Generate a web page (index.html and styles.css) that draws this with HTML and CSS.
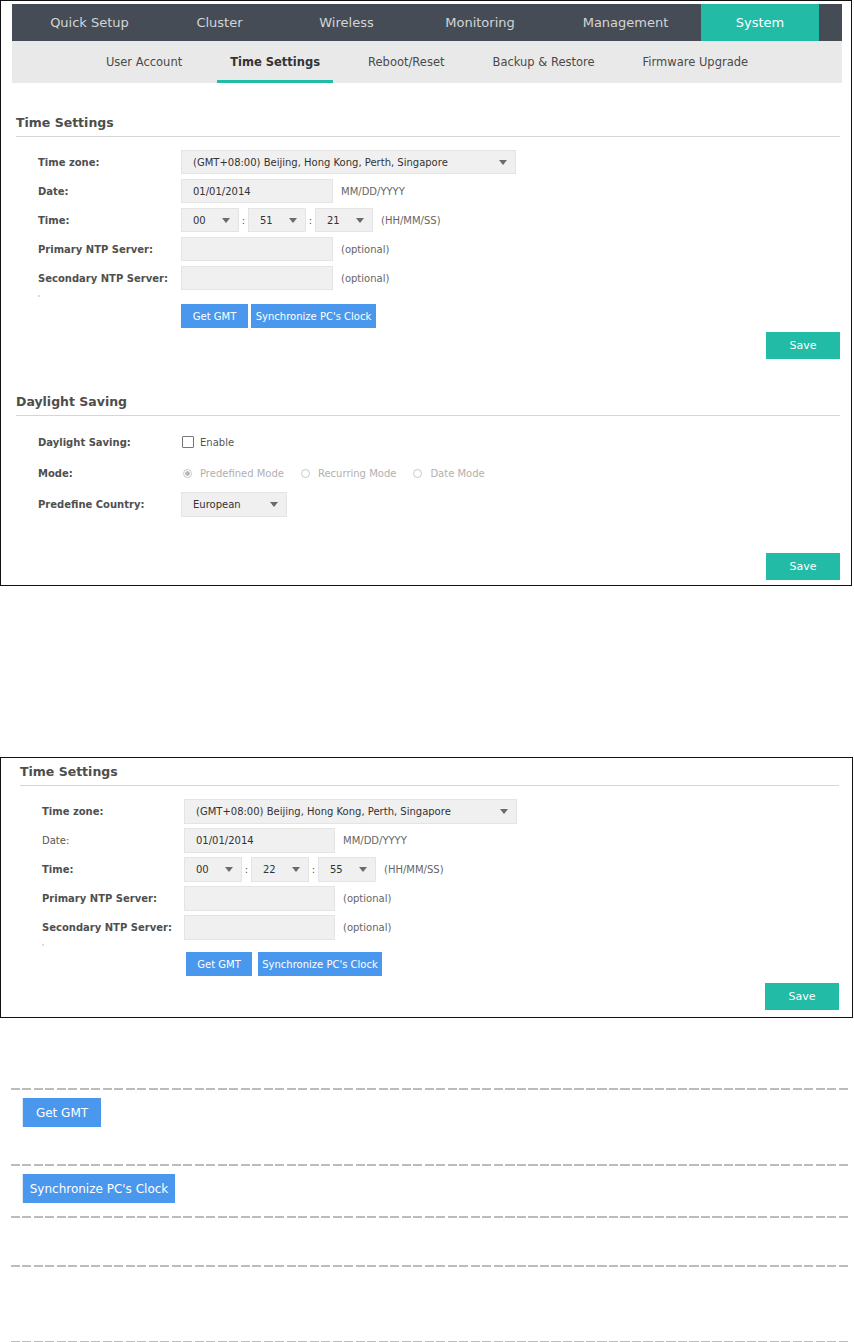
FILE: index.html
```html
<!DOCTYPE html>
<html lang="en">
  <head>
    <meta charset="UTF-8" />
    <title>Time Settings</title>
    <link rel="stylesheet" href="styles.css">
  </head>
  <body>
    <div class="panel panel-main">
      <div class="topnav">
        <a class="tab tab-setup">Quick Setup</a>
        <a class="tab tab-cluster">Cluster</a>
        <a class="tab tab-wireless">Wireless</a>
        <a class="tab tab-monitor">Monitoring</a>
        <a class="tab tab-manage">Management</a>
        <a class="tab tab-system active">System</a>
      </div>
      <div class="subnav">
        <a>User Account</a>
        <a class="active">Time Settings</a>
        <a>Reboot/Reset</a>
        <a>Backup &amp; Restore</a>
        <a>Firmware Upgrade</a>
      </div>

      <div class="section">
        <h3 class="sec-title">Time Settings</h3>
        <div class="form">
          <div class="row">
            <label>Time zone:</label>
            <div class="field select w-zone">(GMT+08:00) Beijing, Hong Kong, Perth, Singapore<span class="caret"></span></div>
          </div>
          <div class="row">
            <label>Date:</label>
            <div class="field w-text">01/01/2014</div>
            <span class="hint">MM/DD/YYYY</span>
          </div>
          <div class="row">
            <label>Time:</label>
            <div class="field select w-time">00<span class="caret"></span></div>
            <span class="colon">:</span>
            <div class="field select w-time">51<span class="caret"></span></div>
            <span class="colon">:</span>
            <div class="field select w-time">21<span class="caret"></span></div>
            <span class="hint">(HH/MM/SS)</span>
          </div>
          <div class="row">
            <label>Primary NTP Server:</label>
            <div class="field w-text"></div>
            <span class="hint">(optional)</span>
          </div>
          <div class="row">
            <label>Secondary NTP Server:</label>
            <div class="field w-text"></div>
            <span class="hint">(optional)</span>
          </div>
          <div class="dot"></div>
          <div class="btns">
            <button class="btn-blue btn-gmt">Get GMT</button>
            <button class="btn-blue btn-sync">Synchronize PC's Clock</button>
          </div>
        </div>
        <div class="save-row">
          <button class="btn-save">Save</button>
        </div>

        <h3 class="sec-title sec-second">Daylight Saving</h3>
        <div class="form">
          <div class="row tall">
            <label>Daylight Saving:</label>
            <span class="checkbox"></span>
            <span class="check-text">Enable</span>
          </div>
          <div class="row tall">
            <label>Mode:</label>
            <span class="option first"><span class="radio checked"></span>Predefined Mode</span>
            <span class="option"><span class="radio"></span>Recurring Mode</span>
            <span class="option"><span class="radio"></span>Date Mode</span>
          </div>
          <div class="row tall">
            <label>Predefine Country:</label>
            <div class="field select w-country">European<span class="caret"></span></div>
          </div>
        </div>
        <div class="save-row save-last">
          <button class="btn-save">Save</button>
        </div>
      </div>
    </div>

    <div class="panel panel-crop">
      <div class="section">
        <h3 class="sec-title">Time Settings</h3>
        <div class="form">
          <div class="row">
            <label>Time zone:</label>
            <div class="field select w-zone">(GMT+08:00) Beijing, Hong Kong, Perth, Singapore<span class="caret"></span></div>
          </div>
          <div class="row">
            <label class="plain">Date:</label>
            <div class="field w-text">01/01/2014</div>
            <span class="hint">MM/DD/YYYY</span>
          </div>
          <div class="row">
            <label>Time:</label>
            <div class="field select w-time">00<span class="caret"></span></div>
            <span class="colon">:</span>
            <div class="field select w-time">22<span class="caret"></span></div>
            <span class="colon">:</span>
            <div class="field select w-time">55<span class="caret"></span></div>
            <span class="hint">(HH/MM/SS)</span>
          </div>
          <div class="row">
            <label>Primary NTP Server:</label>
            <div class="field w-text"></div>
            <span class="hint">(optional)</span>
          </div>
          <div class="row">
            <label>Secondary NTP Server:</label>
            <div class="field w-text"></div>
            <span class="hint">(optional)</span>
          </div>
          <div class="dot"></div>
          <div class="btns">
            <button class="btn-blue btn-gmt">Get GMT</button>
            <button class="btn-blue btn-sync">Synchronize PC's Clock</button>
          </div>
        </div>
        <div class="save-row">
          <button class="btn-save">Save</button>
        </div>
      </div>
    </div>

    <div class="button-list">
      <div class="dash"></div>
      <div class="cell cell-a"><button class="btn-big btn-big-gmt">Get GMT</button></div>
      <div class="dash"></div>
      <div class="cell cell-b"><button class="btn-big btn-big-sync">Synchronize PC's Clock</button></div>
      <div class="dash"></div>
      <div class="cell cell-c"></div>
      <div class="dash"></div>
      <div class="cell cell-a"></div>
      <div class="dash"></div>
    </div>
  </body>
</html>
```

FILE: styles.css
```css
body {
  margin: 0;
  font-family: "DejaVu Sans", "Liberation Sans", sans-serif;
  background-color: #fff;
  color: #555;
}

button {
  font-family: inherit;
  border: none;
  padding: 0;
  cursor: pointer;
}

.panel {
  border: 1px solid #111;
  box-sizing: border-box;
}

.panel-main {
  width: 852px;
  padding-bottom: 5px;
}

/* top navigation */
.topnav {
  display: flex;
  height: 37px;
  margin: 3px 9px 0 11px;
  padding-left: 11px;
  background-color: #464c55;
}

.tab {
  display: block;
  text-align: center;
  font-size: 13px;
  line-height: 36px;
  padding-top: 1px;
  color: #d3d5d8;
}

.tab-setup { width: 133px; }
.tab-cluster { width: 127px; }
.tab-wireless { width: 127px; }
.tab-monitor { width: 140px; }
.tab-manage { width: 151px; }
.tab-system { width: 118px; }

.tab.active {
  background-color: #21bba6;
  color: #fff;
}

.subnav {
  display: flex;
  justify-content: center;
  gap: 22px;
  height: 42px;
  margin: 0 9px 0 11px;
  background-color: #e9e9e9;
}

.subnav a {
  padding: 0 13px;
  font-size: 11.5px;
  line-height: 43px;
  color: #4a4a4a;
}

.subnav a.active {
  font-weight: bold;
  color: #333;
  box-shadow: inset 0 -3px 0 #21bba6;
}

/* sections */
.section {
  padding: 0 11px 0 15px;
}

.sec-title {
  margin: 30px 0 0;
  padding-bottom: 3px;
  font-size: 12.5px;
  line-height: 20px;
  font-weight: bold;
  color: #4d4d4d;
  border-bottom: 1px solid #d6d6d6;
}

.sec-second {
  margin-top: 33px;
}

.form {
  margin-top: 13px;
  padding-left: 22px;
}

.row {
  display: flex;
  align-items: center;
  height: 24px;
  margin-bottom: 5px;
}

.row.tall {
  height: 26px;
}

.row label {
  width: 143px;
  flex-shrink: 0;
  font-size: 10px;
  font-weight: bold;
  color: #4f4f4f;
}

.row label.plain {
  font-weight: normal;
  color: #555;
}

.field {
  display: flex;
  align-items: center;
  height: 24px;
  box-sizing: border-box;
  padding-left: 11px;
  background-color: #f0f0f0;
  border: 1px solid #e4e4e4;
  font-size: 10px;
  color: #333;
}

.w-zone { width: 335px; }
.w-text { width: 152px; }
.w-time { width: 58px; }
.w-country { width: 106px; height: 25px; }

.caret {
  margin-left: auto;
  margin-right: 8px;
  border-left: 4px solid transparent;
  border-right: 4px solid transparent;
  border-top: 5px solid #6b6b6b;
}

.colon {
  width: 9px;
  text-align: center;
  font-size: 10px;
  color: #555;
}

.hint {
  margin-left: 8px;
  font-size: 10px;
  color: #666;
}

.dot {
  width: 2px;
  height: 2px;
  margin-bottom: 7px;
  background-color: #ddd;
}

.btns {
  display: flex;
  gap: 3px;
  margin-left: 143px;
}

.btn-blue {
  height: 24px;
  background-color: #4a98ee;
  color: #fff;
  font-size: 10px;
}

.btn-gmt { width: 67px; }
.btn-sync { width: 125px; }

.save-row {
  display: flex;
  justify-content: flex-end;
  margin-top: 4px;
}

.save-last {
  margin-top: 36px;
}

.btn-save {
  width: 74px;
  height: 27px;
  background-color: #21bba6;
  color: #fff;
  font-size: 11px;
}

/* daylight saving controls */
.checkbox {
  width: 12px;
  height: 12px;
  margin-left: 1px;
  box-sizing: border-box;
  border: 1px solid #777;
  border-radius: 1px;
  background-color: #fff;
}

.check-text {
  margin-left: 6px;
  font-size: 10px;
  color: #555;
}

.option {
  display: flex;
  align-items: center;
  gap: 8px;
  margin-right: 17px;
  font-size: 10px;
  color: #b0b0b0;
}

.option.first {
  margin-left: 2px;
}

.radio {
  width: 9px;
  height: 9px;
  box-sizing: border-box;
  border: 1px solid #c8c8c8;
  border-radius: 50%;
  background-color: #fff;
}

.radio.checked {
  background: radial-gradient(circle, #b8b8b8 0 2px, #fff 2.5px);
}

/* second copy of the form */
.panel-crop {
  width: 853px;
  margin-top: 171px;
  padding-bottom: 7px;
}

.panel-crop .section {
  padding: 0 13px 0 19px;
}

.panel-crop .sec-title {
  margin-top: 4px;
}

.panel-crop .row {
  height: 25px;
  margin-bottom: 4px;
}

.panel-crop .field {
  height: 25px;
}

.panel-crop .row label {
  width: 142px;
}

.panel-crop .w-zone { width: 333px; }
.panel-crop .w-text { width: 151px; }

.panel-crop .dot {
  margin-bottom: 6px;
}

.panel-crop .btns {
  gap: 6px;
  margin-left: 144px;
}

.panel-crop .btn-gmt { width: 66px; }
.panel-crop .btn-sync { width: 124px; }

.panel-crop .save-row {
  margin-top: 7px;
}

/* button list */
.button-list {
  width: 838px;
  margin: 70px 0 0 11px;
}

.dash {
  height: 2px;
  background: repeating-linear-gradient(to right, #bcbcbc 0 9px, transparent 9px 11.5px);
}

.cell {
  box-sizing: border-box;
  padding: 8px 0 0 11px;
}

.cell-a { height: 74px; }
.cell-b { height: 50px; }
.cell-c { height: 47px; }

.btn-big {
  height: 29px;
  border-left: 1px solid #dfe9f5;
  background-color: #4a98ee;
  color: #fff;
  font-size: 12px;
}

.btn-big-gmt { width: 79px; }
.btn-big-sync { width: 153px; }
```
